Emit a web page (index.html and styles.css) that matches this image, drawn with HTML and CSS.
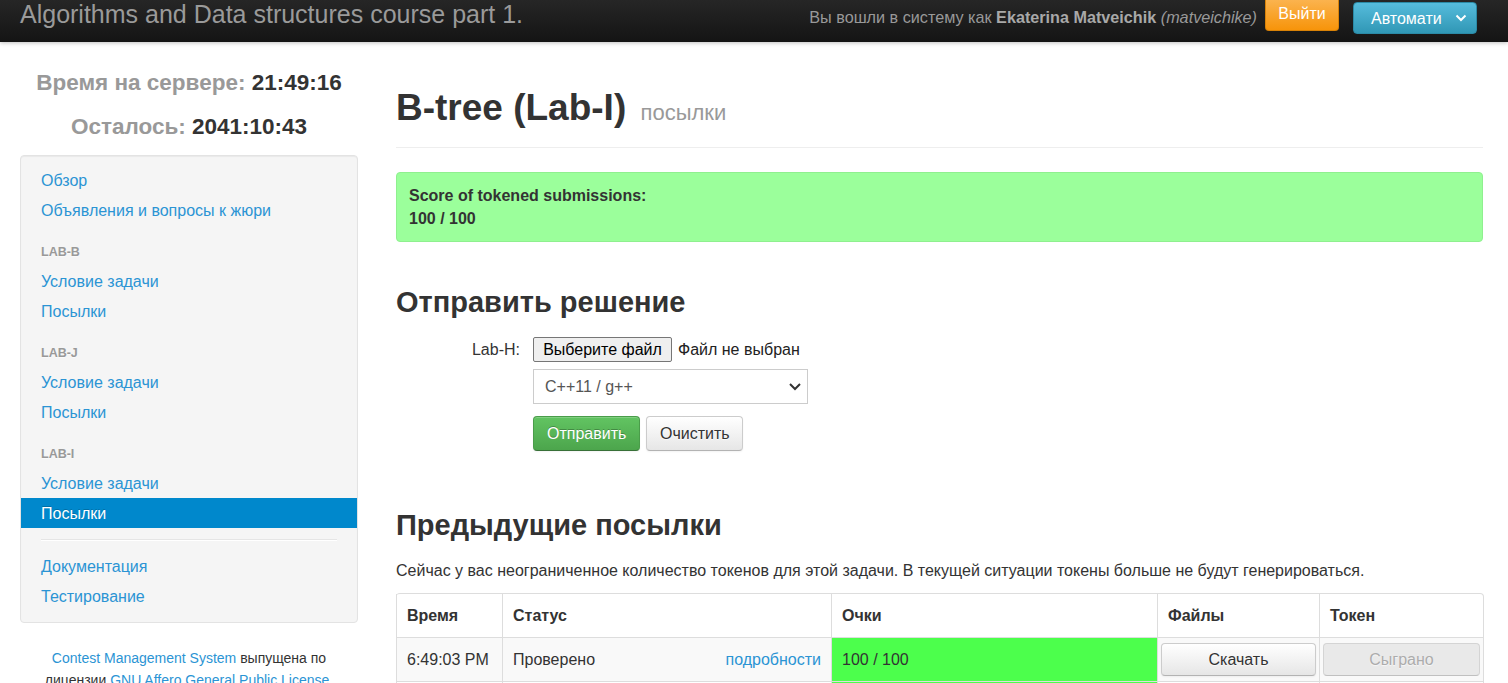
FILE: index.html
```html
<!DOCTYPE html>
<html lang="ru">
<head>
<meta charset="utf-8">
<title>B-tree (Lab-I) посылки</title>
<link rel="stylesheet" href="styles.css">
</head>
<body>
<div class="navbar">
  <div class="brand">Algorithms and Data structures course part 1.</div>
  <div class="nav-right">
    <span class="login-info">Вы вошли в систему как <b>Ekaterina Matveichik</b> <i>(matveichike)</i></span>
    <span class="btn-logout">Выйти</span>
    <span class="btn-lang"><span>Автомати</span><svg class="chev" width="12" height="8" viewBox="0 0 12 8"><polyline points="1.5,1.5 6,6 10.5,1.5" fill="none" stroke="#fff" stroke-width="2"/></svg></span>
  </div>
</div>

<div class="container">
  <aside class="sidebar">
    <div class="clock"><span class="clock-label">Время на сервере:</span> <span class="clock-value">21:49:16</span></div>
    <div class="clock"><span class="clock-label">Осталось:</span> <span class="clock-value">2041:10:43</span></div>
    <div class="well">
      <ul class="nav-list">
        <li><a href="#">Обзор</a></li>
        <li><a href="#">Объявления и вопросы к жюри</a></li>
        <li class="nav-header">Lab-B</li>
        <li><a href="#">Условие задачи</a></li>
        <li><a href="#">Посылки</a></li>
        <li class="nav-header">Lab-J</li>
        <li><a href="#">Условие задачи</a></li>
        <li><a href="#">Посылки</a></li>
        <li class="nav-header">Lab-I</li>
        <li><a href="#">Условие задачи</a></li>
        <li class="active"><a href="#">Посылки</a></li>
        <li class="divider"></li>
        <li><a href="#">Документация</a></li>
        <li><a href="#">Тестирование</a></li>
      </ul>
    </div>
    <div class="footer">
      <div><a href="#">Contest Management System</a> выпущена по</div>
      <div>лицензии <a href="#">GNU Affero General Public License</a>.</div>
    </div>
  </aside>

  <main class="main">
    <div class="page-header">
      <h1>B-tree (Lab-I) <small>посылки</small></h1>
    </div>

    <div class="alert-score">
      <div>Score of tokened submissions:</div>
      <div>100 / 100</div>
    </div>

    <h2 class="section-title first">Отправить решение</h2>

    <form class="submit-form">
      <div class="form-row">
        <label class="form-label">Lab-H:</label>
        <div class="file-input"><span class="file-btn">Выберите файл</span><span class="file-name">Файл не выбран</span></div>
      </div>
      <div class="form-row row-select">
        <span class="form-label"></span>
        <div class="select-box"><span>C++11 / g++</span><svg width="14" height="9" viewBox="0 0 14 9"><polyline points="2,2 7,7 12,2" fill="none" stroke="#333" stroke-width="2"/></svg></div>
      </div>
      <div class="form-row row-buttons">
        <span class="form-label"></span>
        <div class="buttons">
          <span class="btn btn-success">Отправить</span>
          <span class="btn btn-default">Очистить</span>
        </div>
      </div>
    </form>

    <h2 class="section-title second">Предыдущие посылки</h2>
    <p class="tokens-info">Сейчас у вас неограниченное количество токенов для этой задачи. В текущей ситуации токены больше не будут генерироваться.</p>

    <table class="submissions">
      <colgroup>
        <col class="c-time"><col class="c-status"><col class="c-score"><col class="c-files"><col class="c-token">
      </colgroup>
      <thead>
        <tr><th>Время</th><th>Статус</th><th>Очки</th><th>Файлы</th><th>Токен</th></tr>
      </thead>
      <tbody>
        <tr>
          <td>6:49:03 PM</td>
          <td class="status"><span>Проверено</span><a href="#">подробности</a></td>
          <td class="score">100 / 100</td>
          <td class="btn-cell"><span class="btn btn-default btn-block">Скачать</span></td>
          <td class="btn-cell"><span class="btn btn-default btn-block disabled">Сыграно</span></td>
        </tr>
        <tr>
          <td>6:41:27 PM</td>
          <td class="status"><span>Проверено</span><a href="#">подробности</a></td>
          <td class="score">100 / 100</td>
          <td class="btn-cell"><span class="btn btn-default btn-block">Скачать</span></td>
          <td class="btn-cell"><span class="btn btn-default btn-block disabled">Сыграно</span></td>
        </tr>
      </tbody>
    </table>
  </main>
</div>
</body>
</html>
```

FILE: styles.css
```css
html, body {
  margin: 0;
  padding: 0;
  overflow: hidden;
}
body {
  font-family: "Liberation Sans", Arial, sans-serif;
  font-size: 16px;
  line-height: 23px;
  color: #333;
  background: #fff;
}
a {
  color: #2b94d4;
  text-decoration: none;
}

/* navbar */
.navbar {
  height: 42px;
  background: linear-gradient(#262626, #141414);
  box-shadow: 0 1px 4px rgba(0, 0, 0, 0.25);
  display: flex;
  justify-content: space-between;
  align-items: flex-start;
  padding: 0 31px 0 20px;
}
.brand {
  color: #9a9a9a;
  font-size: 25px;
  line-height: 29px;
}
.nav-right {
  display: flex;
  align-items: flex-start;
}
.login-info {
  color: #999;
  font-size: 16.2px;
  line-height: 34px;
  margin-right: 8px;
}
.login-info b {
  color: #a8a8a8;
}
.btn-logout {
  display: block;
  height: 31px;
  width: 74px;
  box-sizing: border-box;
  text-align: center;
  color: #fff;
  font-size: 16px;
  line-height: 28px;
  background: linear-gradient(#fbb34e, #f7940a);
  border-radius: 0 0 4px 4px;
  border: 1px solid #d98207;
  border-top: 0;
  margin-right: 14px;
}
.btn-lang {
  display: flex;
  align-items: center;
  justify-content: space-between;
  height: 32px;
  width: 124px;
  box-sizing: border-box;
  margin-top: 2px;
  padding: 0 9px 0 17px;
  color: #fff;
  font-size: 16px;
  background: linear-gradient(#56bcdc, #3097b5);
  border: 1px solid #2b8aa6;
  border-radius: 4px;
}

/* layout */
.container {
  display: flex;
  align-items: flex-start;
  padding: 0 25px 0 20px;
}
.sidebar {
  width: 338px;
  flex: none;
}
.main {
  flex: 1;
  margin-left: 38px;
  min-width: 0;
}

/* sidebar */
.clock {
  text-align: center;
  font-weight: bold;
  font-size: 22.5px;
  line-height: 44px;
  white-space: nowrap;
}
.clock:first-child {
  margin-top: 19px;
}
.clock-label {
  color: #999;
}
.clock-value {
  color: #333;
}
.well {
  margin-top: 6px;
  background: #f5f5f5;
  border: 1px solid #e3e3e3;
  border-radius: 4px;
  box-shadow: inset 0 1px 1px rgba(0, 0, 0, 0.05);
  padding: 9px 0 11px;
}
.nav-list {
  list-style: none;
  margin: 0;
  padding: 0;
}
.nav-list li a {
  display: block;
  padding: 3.5px 20px;
  line-height: 23px;
}
.nav-list li.active a {
  background: #0088cc;
  color: #fff;
  text-shadow: 0 -1px 0 rgba(0, 0, 0, 0.2);
}
.nav-header {
  margin-top: 10px;
  padding: 6px 20px 2px;
  font-size: 12.5px;
  font-weight: bold;
  line-height: 23px;
  color: #999;
  text-transform: uppercase;
  text-shadow: 0 1px 0 rgba(255, 255, 255, 0.5);
}
.divider {
  height: 1px;
  margin: 11px 20px 10px;
  background: #e5e5e5;
  border-bottom: 1px solid #fff;
}
.footer {
  margin: 24px 0 0;
  text-align: center;
  font-size: 14px;
  line-height: 22px;
  white-space: nowrap;
}

/* main */
.page-header {
  margin-top: 44px;
  padding-bottom: 17px;
  border-bottom: 1px solid #eee;
  margin-bottom: 24px;
}
h1 {
  margin: 0;
  font-size: 37px;
  line-height: 44px;
  height: 44px;
  font-weight: bold;
  color: #333;
}
h1 small {
  font-size: 22px;
  line-height: 1;
  font-weight: normal;
  color: #999;
  margin-left: 4px;
}
.alert-score {
  background: #9bff9b;
  border: 1px solid #8ff08f;
  border-radius: 4px;
  padding: 11px 12px 11px;
  font-weight: bold;
  line-height: 23px;
}
.section-title {
  margin: 0;
  font-size: 29px;
  line-height: 40px;
  font-weight: bold;
  color: #333;
}
.section-title.first {
  margin-top: 40px;
}
.section-title.second {
  margin-top: 54px;
}
.submit-form {
  margin: 15px 0 0;
}
.form-row {
  display: flex;
  align-items: center;
}
.form-label {
  width: 124px;
  margin-right: 13px;
  text-align: right;
  color: #333;
  flex: none;
}
.file-input {
  display: flex;
  align-items: center;
}
.file-btn {
  display: block;
  height: 25px;
  box-sizing: border-box;
  padding: 0 8px;
  line-height: 23px;
  background: #efefef;
  border: 1px solid #767676;
  border-radius: 2px;
  color: #000;
  width: 139px;
  text-align: center;
}
.file-name {
  margin-left: 6px;
  color: #222;
}
.row-select {
  margin-top: 7px;
}
.select-box {
  width: 275px;
  height: 35px;
  box-sizing: border-box;
  border: 1px solid #ccc;
  background: #fff;
  display: flex;
  align-items: center;
  justify-content: space-between;
  padding: 0 5px 0 11px;
  color: #555;
}
.row-buttons {
  margin-top: 12px;
}
.buttons {
  display: flex;
  gap: 6px;
}
.btn {
  display: inline-block;
  box-sizing: border-box;
  height: 35px;
  line-height: 33px;
  padding: 0 13px;
  text-align: center;
  border-radius: 4px;
  border: 1px solid #ccc;
  border-bottom-color: #b3b3b3;
  color: #333;
  background: linear-gradient(#ffffff, #e6e6e6);
  box-shadow: inset 0 1px 0 rgba(255, 255, 255, 0.2), 0 1px 2px rgba(0, 0, 0, 0.05);
  text-shadow: 0 1px 1px rgba(255, 255, 255, 0.75);
}
.btn-success {
  width: 107px;
  color: #fff;
  background: linear-gradient(#62c462, #4ca54c);
  border-color: #4a9d4a #4a9d4a #387038;
  text-shadow: 0 -1px 0 rgba(0, 0, 0, 0.25);
}
.btn-default {
  width: 97px;
}
.btn-block {
  display: block;
  width: 100%;
  height: 33px;
  line-height: 31px;
}
.btn.disabled {
  background: #e6e6e6;
  color: #999;
  opacity: 0.8;
  box-shadow: none;
}
.tokens-info {
  margin: 14px 0 0;
  line-height: 23px;
}

/* table */
.submissions {
  margin-top: 11px;
  width: 100%;
  table-layout: fixed;
  border-collapse: separate;
  border-spacing: 0;
  border: 1px solid #ddd;
  border-left: 0;
  border-radius: 4px;
}
.c-time { width: 106px; }
.c-status { width: 329px; }
.c-score { width: 326px; }
.c-files { width: 162px; }
.c-token { width: 164px; }
.submissions th,
.submissions td {
  text-align: left;
  padding: 10px 10px;
  line-height: 23px;
  border-left: 1px solid #ddd;
  border-top: 1px solid #ddd;
  vertical-align: middle;
}
.submissions thead th {
  border-top: 0;
  font-weight: bold;
}
.submissions tbody tr:first-child td {
  background-color: #f9f9f9;
}
.submissions td.score,
.submissions tbody tr:first-child td.score {
  background-color: #4cff4c;
}
.status {
  display: flex;
  justify-content: space-between;
}
.submissions td.btn-cell {
  padding: 5px 3px;
}
```
